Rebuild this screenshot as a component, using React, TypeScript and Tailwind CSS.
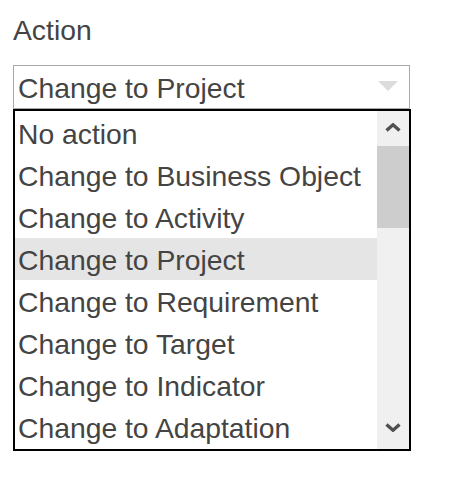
import React from "react";

const options = [
  "No action",
  "Change to Business Object",
  "Change to Activity",
  "Change to Project",
  "Change to Requirement",
  "Change to Target",
  "Change to Indicator",
  "Change to Adaptation",
];

export default function App() {
  return (
    <div
      className="pl-[13px] pt-[14px] text-[#444444] bg-white min-h-[493px]"
      style={{ fontFamily: '"Liberation Sans", Arial, sans-serif' }}
    >
      <div className="text-[28.3px] leading-[32px]">Action</div>
      <div className="mt-[19px] w-[397px] h-[44px] border border-[#a9a9a9] flex items-center justify-between pl-[4px] pr-[11px]">
        <span className="text-[28.3px] leading-[42px] pt-[2px] whitespace-nowrap">Change to Project</span>
        <svg width="20" height="10" viewBox="0 0 20 10" className="mt-[-2px]">
          <polygon points="0,0 20,0 10,10" fill="#dcdcdc" />
        </svg>
      </div>
      <div className="w-[398px] h-[342px] border-2 border-black flex bg-white">
        <div className="flex-1 pt-[1px] overflow-hidden">
          {options.map((o) => (
            <div
              key={o}
              className={
                "h-[42px] pl-[3px] pt-[3px] text-[28.3px] leading-[39px] whitespace-nowrap " +
                (o === "Change to Project" ? "bg-[#e5e5e5]" : "")
              }
            >
              {o}
            </div>
          ))}
        </div>
        <div className="w-[32px] bg-[#f0f0f0] flex flex-col">
          <div className="h-[35px] flex justify-center">
            <svg width="16" height="9" viewBox="0 0 16 9" className="mt-[12px]">
              <polyline points="1.5,7.5 8,1.8 14.5,7.5" fill="none" stroke="#505050" strokeWidth="3.4" />
            </svg>
          </div>
          <div className="h-[82px] bg-[#cdcdcd]" />
          <div className="flex-1" />
          <div className="h-[35px] flex justify-center">
            <svg width="16" height="9" viewBox="0 0 16 9" className="mt-[9px]">
              <polyline points="1.5,1.5 8,7.2 14.5,1.5" fill="none" stroke="#505050" strokeWidth="3.4" />
            </svg>
          </div>
        </div>
      </div>
    </div>
  );
}
